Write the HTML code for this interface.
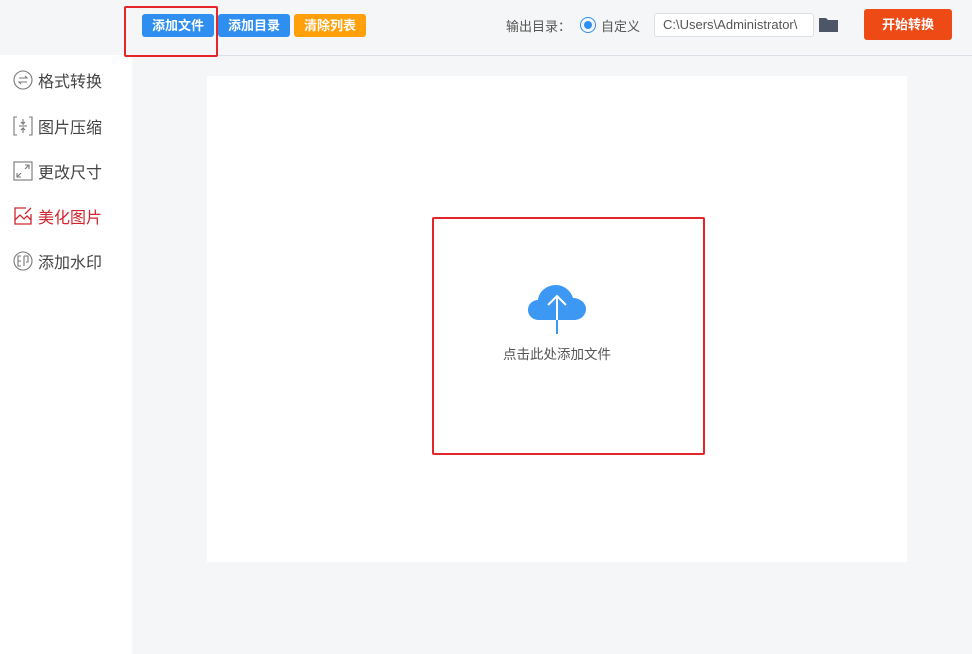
<!DOCTYPE html>
<html><head><meta charset="utf-8"><style>
*{margin:0;padding:0;box-sizing:border-box}
body{width:972px;height:654px;position:relative;background:#fff;font-family:"Liberation Sans","Noto Sans CJK SC",sans-serif;overflow:hidden}
.top{position:absolute;left:0;top:0;width:972px;height:55px;background:#f5f6f8;}
.line{position:absolute;left:132px;top:55px;width:840px;height:1px;background:#dcdfe6}
.main{position:absolute;left:132px;top:56px;width:840px;height:598px;background:#f5f6f8}
.panel{position:absolute;left:207px;top:76px;width:700px;height:486px;background:#fff}
.btn{position:absolute;top:14px;height:23px;width:72px;border-radius:3px;color:#fff;font-size:13px;font-weight:bold;text-align:center;line-height:23px}
.red{position:absolute;border:2px solid #e5252a;border-radius:2px}
.nav{position:absolute;left:12px;font-size:16px;color:#444;display:flex;align-items:center;gap:4px}
.nav svg{width:22px;height:22px}
</style></head><body>
<div class="top"></div><div class="line"></div>
<div class="main"></div><div class="panel"></div>
<div class="btn" style="left:142px;background:#2f8ff0">添加文件</div>
<div class="btn" style="left:218px;background:#2f8ff0">添加目录</div>
<div class="btn" style="left:294px;background:#ffa00a">清除列表</div>
<div class="red" style="left:124px;top:6px;width:94px;height:51px"></div>
<div style="position:absolute;left:506px;top:16px;font-size:13px;color:#555">输出目录：</div>
<div style="position:absolute;left:580px;top:17px;width:16px;height:16px;border:1.5px solid #2f8ff0;border-radius:50%"><div style="margin:2.5px;width:8px;height:8px;border-radius:50%;background:#2f8ff0"></div></div>
<div style="position:absolute;left:601px;top:16px;font-size:13px;color:#555">自定义</div>
<div style="position:absolute;left:654px;top:13px;width:160px;height:24px;background:#fff;border:1px solid #dcdfe6;border-radius:3px;font-size:13px;color:#555;line-height:22px;padding-left:8px;overflow:hidden;white-space:nowrap">C:\Users\Administrator\</div>
<svg style="position:absolute;left:818px;top:16px" width="21" height="17" viewBox="0 0 21 17"><path d="M1 2h7l2 2h10v12H1z" fill="#4d5666"/></svg>
<div style="position:absolute;left:864px;top:9px;width:88px;height:31px;background:#ee4a16;border-radius:3px;color:#fff;font-size:13px;font-weight:bold;text-align:center;line-height:31px">开始转换</div>
<div class="nav" style="top:68px"><svg viewBox="0 0 22 22"><circle cx="11" cy="11" r="9" fill="none" stroke="#777" stroke-width="1.1"/><path d="M7 9h8l-2-2M15 13H7l2 2" fill="none" stroke="#777" stroke-width="1.1"/></svg>格式转换</div>
<div class="nav" style="top:114px"><svg viewBox="0 0 22 22"><path d="M5 2H2v18h3M17 2h3v18h-3M7 11h8M11 4v5l-2-2M11 9l2-2M11 18v-5l-2 2M11 13l2 2" fill="none" stroke="#777" stroke-width="1.1"/></svg>图片压缩</div>
<div class="nav" style="top:159px"><svg viewBox="0 0 22 22"><rect x="2" y="2" width="18" height="18" fill="none" stroke="#777" stroke-width="1.1"/><path d="M13 5h4v4M17 5l-4 4M5 13v4h4M5 17l4-4" fill="none" stroke="#777" stroke-width="1.1"/></svg>更改尺寸</div>
<div class="nav" style="top:204px;color:#d0262e"><svg viewBox="0 0 22 22"><path d="M14 3H3v16h16V9M3 15l5-5 4 4 3-3 4 4M13 9l6-6" fill="none" stroke="#d0262e" stroke-width="1.3"/></svg>美化图片</div>
<div class="nav" style="top:249px"><svg viewBox="0 0 22 22"><circle cx="11" cy="11" r="9" fill="none" stroke="#777" stroke-width="1.1"/><path d="M9 6H6v10h3M6 11h3M12 6v10M12 6h4v6h-2" fill="none" stroke="#777" stroke-width="1.1"/></svg>添加水印</div>
<div class="red" style="left:432px;top:217px;width:273px;height:238px"></div>
<svg style="position:absolute;left:527px;top:283px" width="60" height="52" viewBox="0 0 60 52"><path d="M12 37C5 37 1 32 1 27c0-6 5-10 10-10 1-9 9-15 18-15 8 0 15 6 17 13 7 0 13 5 13 11s-5 11-12 11z" fill="#3d98f4"/><path d="M30 51V13M21 22l9-9 9 9" fill="none" stroke="#fff" stroke-width="2"/><path d="M30 37v14" stroke="#3d98f4" stroke-width="2"/></svg>
<div style="position:absolute;left:457px;top:343px;width:200px;text-align:center;font-size:13.5px;color:#555">点击此处添加文件</div>
</body></html>
